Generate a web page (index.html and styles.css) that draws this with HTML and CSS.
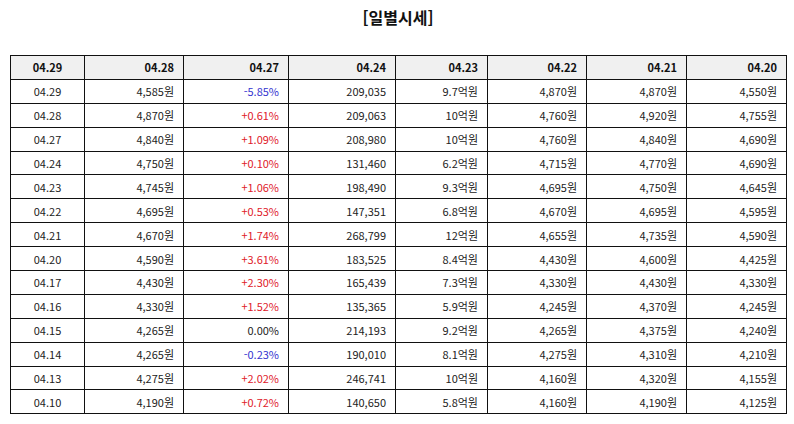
FILE: index.html
```html
<!DOCTYPE html>
<html lang="ko">
<head>
<meta charset="utf-8">
<link rel="stylesheet" href="styles.css">
</head>
<body>
<h1 class="title">[일별시세]</h1>
<table class="grid">
  <colgroup>
    <col class="c1"><col class="c2"><col class="c3"><col class="c4"><col class="c5"><col class="c6"><col class="c7"><col class="c8">
  </colgroup>
  <thead>
    <tr><th class="ctr">04.29</th><th>04.28</th><th>04.27</th><th>04.24</th><th>04.23</th><th>04.22</th><th>04.21</th><th>04.20</th></tr>
  </thead>
  <tbody>
    <tr><td class="ctr">04.29</td><td>4,585원</td><td class="dn">-5.85%</td><td>209,035</td><td>9.7억원</td><td>4,870원</td><td>4,870원</td><td>4,550원</td></tr>
    <tr><td class="ctr">04.28</td><td>4,870원</td><td class="up">+0.61%</td><td>209,063</td><td>10억원</td><td>4,760원</td><td>4,920원</td><td>4,755원</td></tr>
    <tr><td class="ctr">04.27</td><td>4,840원</td><td class="up">+1.09%</td><td>208,980</td><td>10억원</td><td>4,760원</td><td>4,840원</td><td>4,690원</td></tr>
    <tr><td class="ctr">04.24</td><td>4,750원</td><td class="up">+0.10%</td><td>131,460</td><td>6.2억원</td><td>4,715원</td><td>4,770원</td><td>4,690원</td></tr>
    <tr><td class="ctr">04.23</td><td>4,745원</td><td class="up">+1.06%</td><td>198,490</td><td>9.3억원</td><td>4,695원</td><td>4,750원</td><td>4,645원</td></tr>
    <tr><td class="ctr">04.22</td><td>4,695원</td><td class="up">+0.53%</td><td>147,351</td><td>6.8억원</td><td>4,670원</td><td>4,695원</td><td>4,595원</td></tr>
    <tr><td class="ctr">04.21</td><td>4,670원</td><td class="up">+1.74%</td><td>268,799</td><td>12억원</td><td>4,655원</td><td>4,735원</td><td>4,590원</td></tr>
    <tr><td class="ctr">04.20</td><td>4,590원</td><td class="up">+3.61%</td><td>183,525</td><td>8.4억원</td><td>4,430원</td><td>4,600원</td><td>4,425원</td></tr>
    <tr><td class="ctr">04.17</td><td>4,430원</td><td class="up">+2.30%</td><td>165,439</td><td>7.3억원</td><td>4,330원</td><td>4,430원</td><td>4,330원</td></tr>
    <tr><td class="ctr">04.16</td><td>4,330원</td><td class="up">+1.52%</td><td>135,365</td><td>5.9억원</td><td>4,245원</td><td>4,370원</td><td>4,245원</td></tr>
    <tr><td class="ctr">04.15</td><td>4,265원</td><td>0.00%</td><td>214,193</td><td>9.2억원</td><td>4,265원</td><td>4,375원</td><td>4,240원</td></tr>
    <tr><td class="ctr">04.14</td><td>4,265원</td><td class="dn">-0.23%</td><td>190,010</td><td>8.1억원</td><td>4,275원</td><td>4,310원</td><td>4,210원</td></tr>
    <tr><td class="ctr">04.13</td><td>4,275원</td><td class="up">+2.02%</td><td>246,741</td><td>10억원</td><td>4,160원</td><td>4,320원</td><td>4,155원</td></tr>
    <tr><td class="ctr">04.10</td><td>4,190원</td><td class="up">+0.72%</td><td>140,650</td><td>5.8억원</td><td>4,160원</td><td>4,190원</td><td>4,125원</td></tr>
  </tbody>
</table>
</body>
</html>
```
FILE: styles.css
```css
html, body {
  margin: 0;
  padding: 0;
  background: #fff;
}
body {
  font-family: "Noto Sans CJK KR", "Noto Sans", sans-serif;
  color: #222;
  padding: 0 8px 0 10px;
}
.title {
  margin: 0;
  padding-top: 5px;
  height: 50px;
  box-sizing: border-box;
  text-align: center;
  font-size: 16px;
  font-weight: bold;
  line-height: 24px;
  color: #111;
}
.grid {
  width: 776px;
  border-collapse: collapse;
  table-layout: fixed;
  font-size: 11px;
  border: 1px solid #111;
  margin-top: 5px;
}
.c1 { width: 74px; }
.c2 { width: 99px; }
.c3 { width: 105px; }
.c4 { width: 107px; }
.c5 { width: 92px; }
.c6 { width: 99px; }
.c7 { width: 100px; }
.c8 { width: 100px; }
.grid th, .grid td {
  border: 1px solid #111;
  height: 22.9px;
  padding: 0 9px 0 4px;
  text-align: right;
  line-height: 14px;
  white-space: nowrap;
}
.grid th {
  background: #f0f0f0;
  font-weight: bold;
  color: #111;
}
.grid .ctr {
  text-align: center;
  padding: 0;
}
.up { color: #e0202a; }
.dn { color: #3434d0; }
```
